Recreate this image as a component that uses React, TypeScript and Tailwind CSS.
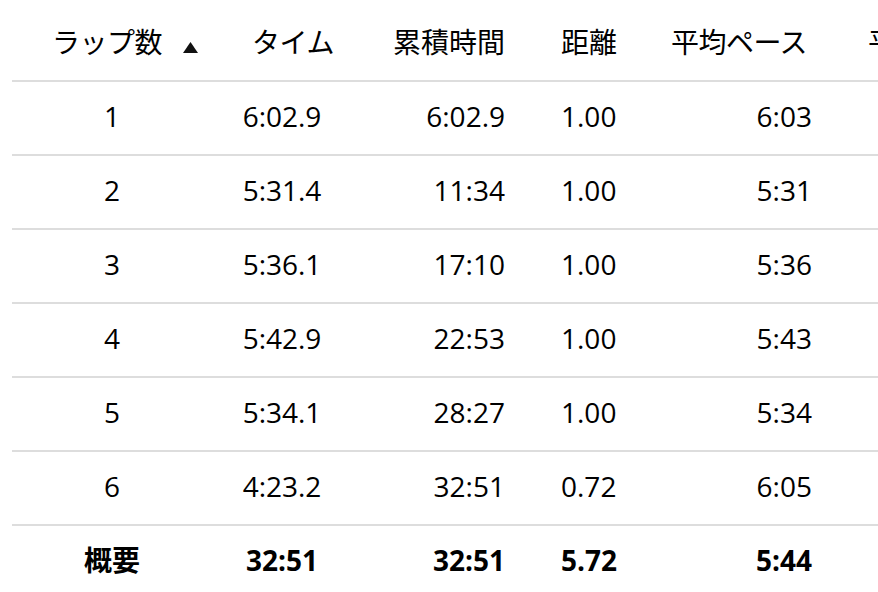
const laps = [
  { lap: "1", time: "6:02.9", total: "6:02.9", dist: "1.00", pace: "6:03" },
  { lap: "2", time: "5:31.4", total: "11:34", dist: "1.00", pace: "5:31" },
  { lap: "3", time: "5:36.1", total: "17:10", dist: "1.00", pace: "5:36" },
  { lap: "4", time: "5:42.9", total: "22:53", dist: "1.00", pace: "5:43" },
  { lap: "5", time: "5:34.1", total: "28:27", dist: "1.00", pace: "5:34" },
  { lap: "6", time: "4:23.2", total: "32:51", dist: "0.72", pace: "6:05" },
];

const cols = "grid grid-cols-[200px_140px_178px_120px_190px_140px]";

function Row({
  lap,
  time,
  total,
  dist,
  pace,
  bold = false,
}: {
  lap: string;
  time: string;
  total: string;
  dist: string;
  pace: string;
  bold?: boolean;
}) {
  return (
    <div
      className={`${cols} h-[74px] items-center border-t-2 border-[#dddddd] pb-[4px] ${
        bold ? "font-bold" : ""
      }`}
    >
      <div className="text-center">{lap}</div>
      <div className="text-center">{time}</div>
      <div className="pr-[25px] text-right">{total}</div>
      <div className="pl-[31px] text-left">{dist}</div>
      <div className="pr-[28px] text-right">{pace}</div>
      <div />
    </div>
  );
}

export default function App() {
  return (
    <div
      className="w-[878px] h-[592px] overflow-hidden bg-white pl-3 text-[28px] leading-none text-black"
      style={{ fontFamily: '"Open Sans", "Noto Sans CJK JP", sans-serif' }}
    >
      <div className="w-[968px]">
        {/* Header */}
        <div className={`${cols} h-[80px] items-center pt-1`}>
          <div className="flex items-center pl-[40px]">
            <span className="tracking-[-0.5px]">ラップ数</span>
            <svg
              width="15"
              height="11"
              viewBox="0 0 15 11"
              className="ml-[21px] mt-[10px]"
            >
              <polygon points="7.5,0 15,11 0,11" fill="#111" />
            </svg>
          </div>
          <div className="pl-[40px] tracking-[-0.5px]">タイム</div>
          <div className="pr-[25px] text-right">累積時間</div>
          <div className="pl-[31px]">距離</div>
          <div className="pr-[33px] text-right tracking-[-0.5px]">平均ペース</div>
          <div className="pl-[28px] whitespace-nowrap">平均心拍数</div>
        </div>

        {laps.map((l) => (
          <Row key={l.lap} {...l} />
        ))}
        <Row lap="概要" time="32:51" total="32:51" dist="5.72" pace="5:44" bold />
      </div>
    </div>
  );
}
